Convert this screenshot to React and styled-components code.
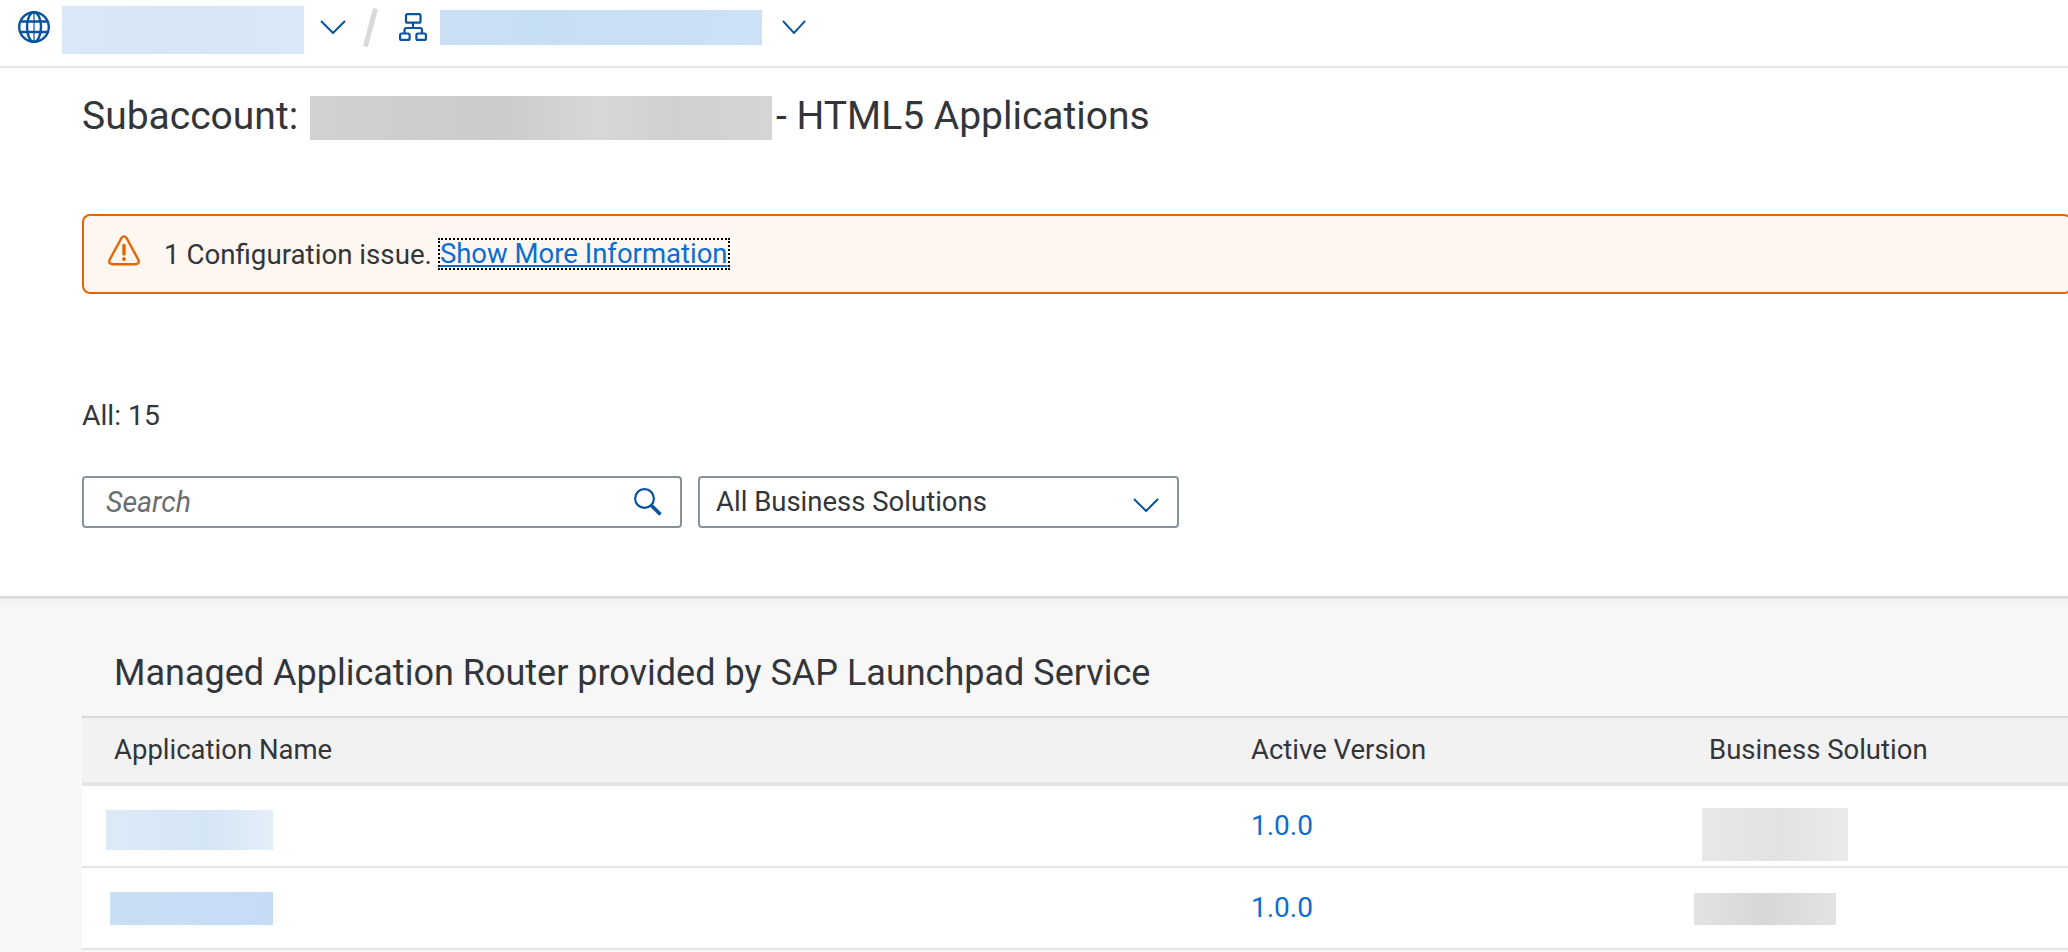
import React from 'react';
import styled, { createGlobalStyle } from 'styled-components';

const GlobalStyle = createGlobalStyle`
    html, body { margin: 0; padding: 0; background: #fff; }
    body { font-family: Roboto, "Noto Sans", "Liberation Sans", sans-serif; color: #32363a; }
    * { box-sizing: border-box; }
`;

const Page = styled.div`
    width: 2068px; height: 952px; overflow: hidden; display: flex; flex-direction: column;
`;

const Toolbar = styled.div`
    display: flex; align-items: center; height: 68px; padding: 0 0 12px 18px;
    border-bottom: 2px solid #e5e5e5;
`;

const Redaction = styled.div`
    flex: none;
    width: ${(p) => p.$w}px;
    height: ${(p) => p.$h}px;
    margin: ${(p) => p.$m || '0'};
    background: ${(p) => p.$bg};
`;

const IconWrap = styled.svg`
    flex: none; display: block; margin: ${(p) => p.$m || '0'};
`;

const Slash = styled.div`
    flex: none; width: 5px; height: 39px; margin: 0 26px 0 22px;
    background: #d9d9d9; transform: rotate(15deg);
`;

const TopSection = styled.section`
    flex: none; height: 528px; padding: 28px 0 0 82px; background: #fff;
`;

const Title = styled.div`
    display: flex; align-items: center; height: 44px;
    font-size: 39px; white-space: nowrap; color: #32363a;
`;

const TitleText = styled.span`
    margin-top: -5px;
`;

const Alert = styled.div`
    display: flex; align-items: center; height: 80px; margin: 74px -4px 0 0;
    padding-left: 24px; background: #fef7f1; border: 2px solid #e76500; border-radius: 8px;
    font-size: 27.7px; white-space: nowrap;
`;

const AlertText = styled.span`
    margin-left: 24px; margin-right: 8px;
`;

const FocusLink = styled.a`
    display: inline-block; line-height: 28px; font-size: 27.5px; color: #0a6ed1;
    text-decoration: underline; outline: 2px dotted #000; outline-offset: 0;
`;

const Count = styled.div`
    margin-top: 107px; height: 30px; line-height: 30px; font-size: 28.3px;
`;

const Filters = styled.div`
    display: flex; gap: 16px; margin-top: 45px;
`;

const Field = styled.div`
    display: flex; align-items: center; justify-content: space-between;
    width: ${(p) => p.$w}px; height: 52px; padding: 0 18px 0 ${(p) => p.$pad}px;
    border: 2px solid #89919a; border-radius: 4px; background: #fff; font-size: 27.5px;
`;

const FieldLabel = styled.span`
    margin-top: -2px;
`;

const SearchInput = styled.input`
    flex: 1; min-width: 0; border: 0; outline: 0; padding: 0; background: transparent;
    font: italic 28.5px Roboto, "Noto Sans", sans-serif; color: #32363a;
    &::placeholder { color: #6a6d70; opacity: 1; }
`;

const Lower = styled.section`
    flex: 1; padding-left: 82px;
    background: linear-gradient(#d9d9d9 0, #d9d9d9 2px, #f1f1f1 3px, #f7f7f7 14px);
`;

const SectionTitle = styled.h2`
    margin: 0; padding: 55px 0 0 32px; height: 120px; line-height: 44px;
    font-size: 36px; font-weight: 400; white-space: nowrap; color: #32363a;
`;

const HeaderRow = styled.div`
    display: grid; grid-template-columns: 1169px 443px 1fr; align-items: center;
    height: 70px; padding-bottom: 2px; background: #f2f2f2; border-top: 2px solid #d9d9d9; border-bottom: 4px solid #e5e5e5;
    font-size: 27.5px;
`;

const HeaderCell = styled.div`
    padding-left: ${(p) => p.$pad || 0}px;
`;

const Row = styled.div`
    display: grid; grid-template-columns: 1169px 443px 1fr; align-items: start;
    height: 82px; background: #fff; border-bottom: 2px solid #e5e5e5;
`;

const VersionLink = styled.a`
    align-self: center; margin-bottom: 2px; font-size: 28px; color: #0a6ed1; text-decoration: none;
`;

const Chevron = ({ w = 26, m }) => (
    <IconWrap $m={m} width={w} height="14" viewBox="0 0 26 14" preserveAspectRatio="none" fill="none">
        <path d="M1 1 L13 13 L25 1" stroke="#0854a0" strokeWidth="2" />
    </IconWrap>
);

const GlobeIcon = () => (
    <IconWrap width="32" height="32" viewBox="0 0 32 32" fill="none" stroke="#0854a0" strokeWidth="2.4">
        <circle cx="16" cy="16" r="14.8" />
        <ellipse cx="16" cy="16" rx="7" ry="14.8" />
        <path d="M2.5 10.5h27M2.5 21h27" />
        <path d="M16 1.2v29.6" strokeWidth="1.2" />
    </IconWrap>
);

const TreeIcon = () => (
    <IconWrap $m="0 13px 0 0" width="28" height="28" viewBox="0 0 28 28" fill="none" stroke="#0854a0" strokeWidth="2.2">
        <rect x="7" y="1.1" width="14.5" height="8.6" rx="1.5" />
        <path d="M14 10v5M5.5 20.5v-3.5a2 2 0 0 1 2-2h13.5a2 2 0 0 1 2 2v3.5" />
        <rect x="1.1" y="20.5" width="9.5" height="6.4" rx="1.5" />
        <rect x="17.4" y="20.5" width="9.5" height="6.4" rx="1.5" />
    </IconWrap>
);

const WarningIcon = () => (
    <IconWrap $m="-8px 0 0 0" width="32" height="31" viewBox="0 0 32 31" fill="none">
        <path d="M13.6 2.8 Q16 0 18.4 2.8 L30.2 24.5 Q32 29 27.5 29.2 L4.5 29.2 Q0 29 1.8 24.5 Z" stroke="#e76500" strokeWidth="2.4" strokeLinejoin="round" />
        <path d="M16 10.5v8.5" stroke="#e76500" strokeWidth="3.4" strokeLinecap="round" />
        <circle cx="16" cy="24" r="1.9" fill="#e76500" />
    </IconWrap>
);

const SearchIcon = () => (
    <IconWrap width="28" height="28" viewBox="0 0 28 28" fill="none">
        <circle cx="10.5" cy="10.5" r="9.4" stroke="#0854a0" strokeWidth="2.2" />
        <path d="M17 17 L26.5 26.5" stroke="#0854a0" strokeWidth="3.6" />
    </IconWrap>
);

const App = () => {
    return (
        <Page>
            <GlobalStyle />
            <Toolbar>
                <GlobeIcon />
                <Redaction $w={242} $h={48} $m="6px 16px 0 12px" $bg="linear-gradient(90deg, #d9e8f8, #d6e6f7 50%, #d9e8f8)" />
                <Chevron />
                <Slash />
                <TreeIcon />
                <Redaction $w={322} $h={35} $bg="linear-gradient(90deg, #cbe0f5, #c6def4 30%, #cbe0f5 80%, #cde1f5)" />
                <Chevron w={24} m="0 0 0 20px" />
            </Toolbar>

            <TopSection>
                <Title>
                    <TitleText>Subaccount:</TitleText>
                    <Redaction $w={462} $h={44} $m="0 4px 0 12px" $bg="linear-gradient(90deg, #d0d1d2, #cbcbcc 40%, #d6d7d7 62%, #cfd0d1 80%, #d4d5d5)" />
                    <TitleText>- HTML5 Applications</TitleText>
                </Title>
                <Alert>
                    <WarningIcon />
                    <AlertText>1 Configuration issue.</AlertText>
                    <FocusLink href="#">Show More Information</FocusLink>
                </Alert>
                <Count>All: 15</Count>
                <Filters>
                    <Field $w={600} $pad={22}>
                        <SearchInput placeholder="Search" />
                        <SearchIcon />
                    </Field>
                    <Field $w={481} $pad={16}>
                        <FieldLabel>All Business Solutions</FieldLabel>
                        <Chevron m="6px 0 0 0" />
                    </Field>
                </Filters>
            </TopSection>

            <Lower>
                <SectionTitle>Managed Application Router provided by SAP Launchpad Service</SectionTitle>
                <HeaderRow>
                    <HeaderCell $pad={32}>Application Name</HeaderCell>
                    <HeaderCell>Active Version</HeaderCell>
                    <HeaderCell $pad={15}>Business Solution</HeaderCell>
                </HeaderRow>
                <Row>
                    <Redaction $w={167} $h={40} $m="24px 0 0 24px" $bg="linear-gradient(90deg, #dceaf8, #d4e5f6 60%, #e4eef9)" />
                    <VersionLink href="#">1.0.0</VersionLink>
                    <Redaction $w={146} $h={53} $m="22px 0 0 8px" $bg="linear-gradient(90deg, #e8e8e8, #e2e2e2 50%, #ebebeb)" />
                </Row>
                <Row>
                    <Redaction $w={163} $h={33} $m="24px 0 0 28px" $bg="linear-gradient(90deg, #c8def5, #c5dcf4)" />
                    <VersionLink href="#">1.0.0</VersionLink>
                    <Redaction $w={142} $h={32} $m="25px 0 0 0" $bg="linear-gradient(90deg, #e3e3e3, #d6d7d7 50%, #e3e3e3)" />
                </Row>
            </Lower>
        </Page>
    );
};

export default App;
